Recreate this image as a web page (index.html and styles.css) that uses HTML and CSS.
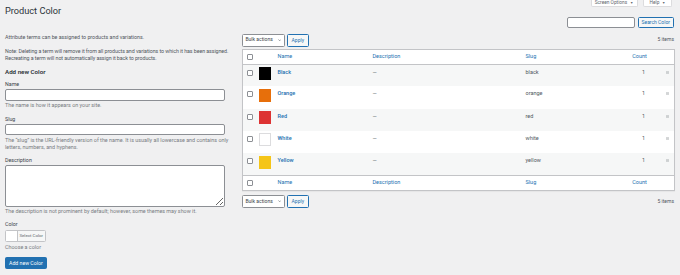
FILE: index.html
```html
<!DOCTYPE html>
<html lang="en">
<head>
<meta charset="utf-8">
<title>Product Color</title>
<link rel="stylesheet" href="styles.css">
</head>
<body>
<div class="page">
  <div class="topbar">
    <h1 class="title">Product Color</h1>
    <div class="meta-links">
      <button class="meta-tab tab-screen">Screen Options <span class="caret">▼</span></button>
      <button class="meta-tab tab-help">Help <span class="caret">▼</span></button>
    </div>
  </div>
  <div class="search-row">
    <input class="search-input" type="search">
    <button class="btn-secondary search-btn">Search Color</button>
  </div>
  <div class="cols">
    <div class="col-left">
      <p class="intro">Attribute terms can be assigned to products and variations.</p>
      <p class="note">Note: Deleting a term will remove it from all products and variations to which it has been assigned. Recreating a term will not automatically assign it back to products.</p>
      <h2 class="form-title">Add new Color</h2>
      <div class="field">
        <label class="label">Name</label>
        <input class="text-input" type="text">
        <p class="desc">The name is how it appears on your site.</p>
      </div>
      <div class="field">
        <label class="label">Slug</label>
        <input class="text-input" type="text">
        <p class="desc">The “slug” is the URL-friendly version of the name. It is usually all lowercase and contains only letters, numbers, and hyphens.</p>
      </div>
      <div class="field">
        <label class="label">Description</label>
        <textarea class="textarea"></textarea>
        <p class="desc">The description is not prominent by default; however, some themes may show it.</p>
      </div>
      <div class="field">
        <label class="label">Color</label>
        <button class="color-btn"><span class="color-result"></span><span class="color-text">Select Color</span></button>
        <p class="desc choose">Choose a color</p>
      </div>
      <button class="btn-primary">Add new Color</button>
    </div>
    <div class="col-right">
      <div class="tablenav">
        <div class="actions">
          <div class="select">Bulk actions <svg class="chev" viewBox="0 0 10 6"><path d="M1 1l4 4 4-4" fill="none" stroke="#3c434a" stroke-width="1.4"/></svg></div>
          <button class="btn-secondary apply">Apply</button>
        </div>
        <span class="count-items">5 items</span>
      </div>
      <table class="terms">
        <thead>
          <tr><th class="c-cb"><span class="cb"></span></th><th class="c-thumb"></th><th class="c-name">Name</th><th class="c-desc">Description</th><th class="c-slug">Slug</th><th class="c-count">Count</th><th class="c-handle"></th></tr>
        </thead>
        <tbody>
          <tr class="alt"><td class="c-cb"><span class="cb"></span></td><td class="c-thumb"><span class="sw" style="background:#000000"></span></td><td class="c-name"><a class="term">Black</a></td><td class="c-desc">—</td><td class="c-slug">black</td><td class="c-count">1</td><td class="c-handle"><svg class="handle" viewBox="0 0 5 4"><path d="M0 .5h5M0 2h5M0 3.5h5" stroke="#a7aaad" stroke-width=".7"/></svg></td></tr>
          <tr><td class="c-cb"><span class="cb"></span></td><td class="c-thumb"><span class="sw" style="background:#e76f0b"></span></td><td class="c-name"><a class="term">Orange</a></td><td class="c-desc">—</td><td class="c-slug">orange</td><td class="c-count">1</td><td class="c-handle"><svg class="handle" viewBox="0 0 5 4"><path d="M0 .5h5M0 2h5M0 3.5h5" stroke="#a7aaad" stroke-width=".7"/></svg></td></tr>
          <tr class="alt"><td class="c-cb"><span class="cb"></span></td><td class="c-thumb"><span class="sw" style="background:#dd3333"></span></td><td class="c-name"><a class="term">Red</a></td><td class="c-desc">—</td><td class="c-slug">red</td><td class="c-count">1</td><td class="c-handle"><svg class="handle" viewBox="0 0 5 4"><path d="M0 .5h5M0 2h5M0 3.5h5" stroke="#a7aaad" stroke-width=".7"/></svg></td></tr>
          <tr><td class="c-cb"><span class="cb"></span></td><td class="c-thumb"><span class="sw sw-white" style="background:#ffffff"></span></td><td class="c-name"><a class="term">White</a></td><td class="c-desc">—</td><td class="c-slug">white</td><td class="c-count">1</td><td class="c-handle"><svg class="handle" viewBox="0 0 5 4"><path d="M0 .5h5M0 2h5M0 3.5h5" stroke="#a7aaad" stroke-width=".7"/></svg></td></tr>
          <tr class="alt"><td class="c-cb"><span class="cb"></span></td><td class="c-thumb"><span class="sw" style="background:#f5c518"></span></td><td class="c-name"><a class="term">Yellow</a></td><td class="c-desc">—</td><td class="c-slug">yellow</td><td class="c-count">1</td><td class="c-handle"><svg class="handle" viewBox="0 0 5 4"><path d="M0 .5h5M0 2h5M0 3.5h5" stroke="#a7aaad" stroke-width=".7"/></svg></td></tr>
        </tbody>
        <tfoot>
          <tr><th class="c-cb"><span class="cb"></span></th><th class="c-thumb"></th><th class="c-name">Name</th><th class="c-desc">Description</th><th class="c-slug">Slug</th><th class="c-count">Count</th><th class="c-handle"></th></tr>
        </tfoot>
      </table>
      <div class="tablenav bottom">
        <div class="actions">
          <div class="select">Bulk actions <svg class="chev" viewBox="0 0 10 6"><path d="M1 1l4 4 4-4" fill="none" stroke="#3c434a" stroke-width="1.4"/></svg></div>
          <button class="btn-secondary apply">Apply</button>
        </div>
        <span class="count-items">5 items</span>
      </div>
    </div>
  </div>
</div>
</body>
</html>
```
FILE: styles.css
```css
* { box-sizing: border-box; }
body {
  margin: 0;
  background: #f0f0f1;
  font-family: Roboto, "Liberation Sans", sans-serif;
  font-size: 5.3px;
  line-height: 7.5px;
  color: #50575e;
}
p { margin: 0; }
button { font-family: inherit; cursor: pointer; }
.page { padding: 0 6px 0 5px; }

.topbar { display: flex; justify-content: space-between; align-items: flex-start; height: 17px; }
.title { margin: 5px 0 0; font-size: 9.2px; line-height: 12px; font-weight: 400; color: #2c3338; }
.meta-links { display: flex; gap: 5.5px; margin-right: 2px; }
.meta-tab {
  height: 7.3px; padding: 0; margin: 0;
  background: #fff; border: 1px solid #dcdcde; border-top: 0; border-radius: 0 0 2px 2px;
  font-size: 4.8px; line-height: 6px; color: #646970; text-align: center;
}
.tab-screen { width: 47px; }
.tab-help { width: 29px; }
.caret { font-size: 3.4px; margin-left: 1.5px; }

.search-row { display: flex; justify-content: flex-end; gap: 2.5px; height: 11px; }
.search-input { width: 68px; height: 11px; margin: 0; border: 1px solid #8c8f94; border-radius: 2px; background: #fff; }
.btn-secondary {
  height: 11px; margin: 0; padding: 0 3px;
  background: #f6f7f7; border: 1px solid #2271b1; border-radius: 1.5px;
  color: #2271b1; font-size: 5px; line-height: 9px;
}
.search-btn { width: 36.5px; padding: 0; }

.cols { display: flex; align-items: flex-start; }
.col-left { width: 230px; flex: none; }
.col-right { flex: 1; margin-left: 7px; }

.intro { margin-top: 6.3px; }
.note { margin-top: 6px; letter-spacing: -0.07px; }
.form-title { margin: 5.3px 0 0; font-size: 6.2px; line-height: 8px; font-weight: 600; color: #2c3338; }
.field { margin-top: 5.3px; }
.label { display: block; color: #3c434a; }
.text-input { display: block; width: 220px; height: 11.3px; margin: 0.5px 0 0; border: 1px solid #8c8f94; border-radius: 2px; background: #fff; }
.textarea { display: block; width: 220px; height: 41.5px; margin: 1px 0 0; border: 1px solid #8c8f94; border-radius: 2px; background: #fff; resize: vertical; }
.desc { margin-top: 1.5px; color: #787c82; font-size: 5.4px; }
.field:nth-of-type(2) { margin-top: 6.5px; }
.field:nth-of-type(3) { margin-top: 5px; }
.field:nth-of-type(4) { margin-top: 5.5px; }

.color-btn {
  display: flex; align-items: stretch; width: 40.7px; height: 11.3px; margin: 1.5px 0 0; padding: 0;
  background: #f6f7f7; border: 1px solid #c3c4c7; border-radius: 1.5px; overflow: hidden;
}
.color-result { width: 11.7px; background: #fff; border-right: 1px solid #c3c4c7; }
.color-text { flex: 1; font-size: 4.4px; line-height: 9.3px; color: #646970; text-align: center; }
.choose { margin-top: 2.5px; }

.btn-primary {
  display: block; margin-top: 4.8px; width: 41.7px; height: 12.6px; padding: 0;
  background: #2271b1; border: 1px solid #2271b1; border-radius: 1.5px;
  color: #fff; font-size: 5.2px; line-height: 10px;
}

.tablenav { display: flex; justify-content: space-between; align-items: center; margin-top: 5.5px; height: 13px; }
.tablenav.bottom { margin-top: 4px; }
.actions { display: flex; gap: 2.5px; }
.select {
  display: flex; align-items: center; justify-content: space-between;
  width: 42.5px; height: 13px; padding: 0 2.5px 0 2.5px;
  background: #fff; border: 1px solid #8c8f94; border-radius: 1.5px; color: #3c434a; font-size: 5px;
}
.chev { width: 3.4px; height: 2.2px; }
.apply { width: 21.6px; height: 13px; padding: 0; line-height: 11px; }
.count-items { color: #50575e; font-size: 5px; margin-right: 1px; }

.terms {
  width: 100%; margin-top: 2px; border-collapse: collapse; table-layout: fixed;
  background: #fff; border: 1px solid #c3c4c7; box-shadow: 0 1px 1px rgba(0,0,0,.04);
  font-size: 5.5px;
}
.terms th, .terms td { padding: 0; text-align: left; vertical-align: middle; font-weight: 400; }
.terms thead th { height: 15px; border-bottom: 1px solid #c3c4c7; color: #2271b1; }
.terms tfoot th { height: 15px; border-top: 1px solid #c3c4c7; color: #2271b1; }
.terms tbody td { height: 22.3px; vertical-align: top; padding-top: 4px; }
.terms tbody tr.alt { background: #f6f7f7; }
.c-cb { width: 14px; padding-left: 4px !important; }
.c-thumb { width: 20px; padding-left: 2px !important; }
.c-name { width: 94px; padding-left: 1px !important; }
.c-desc { width: 153px; padding-left: 2px !important; }
.c-slug { width: 96px; padding-left: 2px !important; }
.c-count { width: 40px; text-align: center !important; }
.c-handle { width: 15px; }
.terms tbody .c-cb { padding-top: 5px; }
.terms tbody .c-thumb { padding-top: 2.4px; }
.terms tbody .c-count { padding-left: 8px !important; }
.cb { display: block; width: 6px; height: 6px; border: 1px solid #8c8f94; border-radius: 1px; background: #fff; }
.sw { display: block; width: 12.8px; height: 13px; }
.sw-white { border: 1px solid #dcdcde; }
.term { color: #2271b1; font-weight: 500; text-decoration: none; }
.handle { display: block; width: 3.6px; height: 3px; margin: 2px 0 0 6px; }
```
